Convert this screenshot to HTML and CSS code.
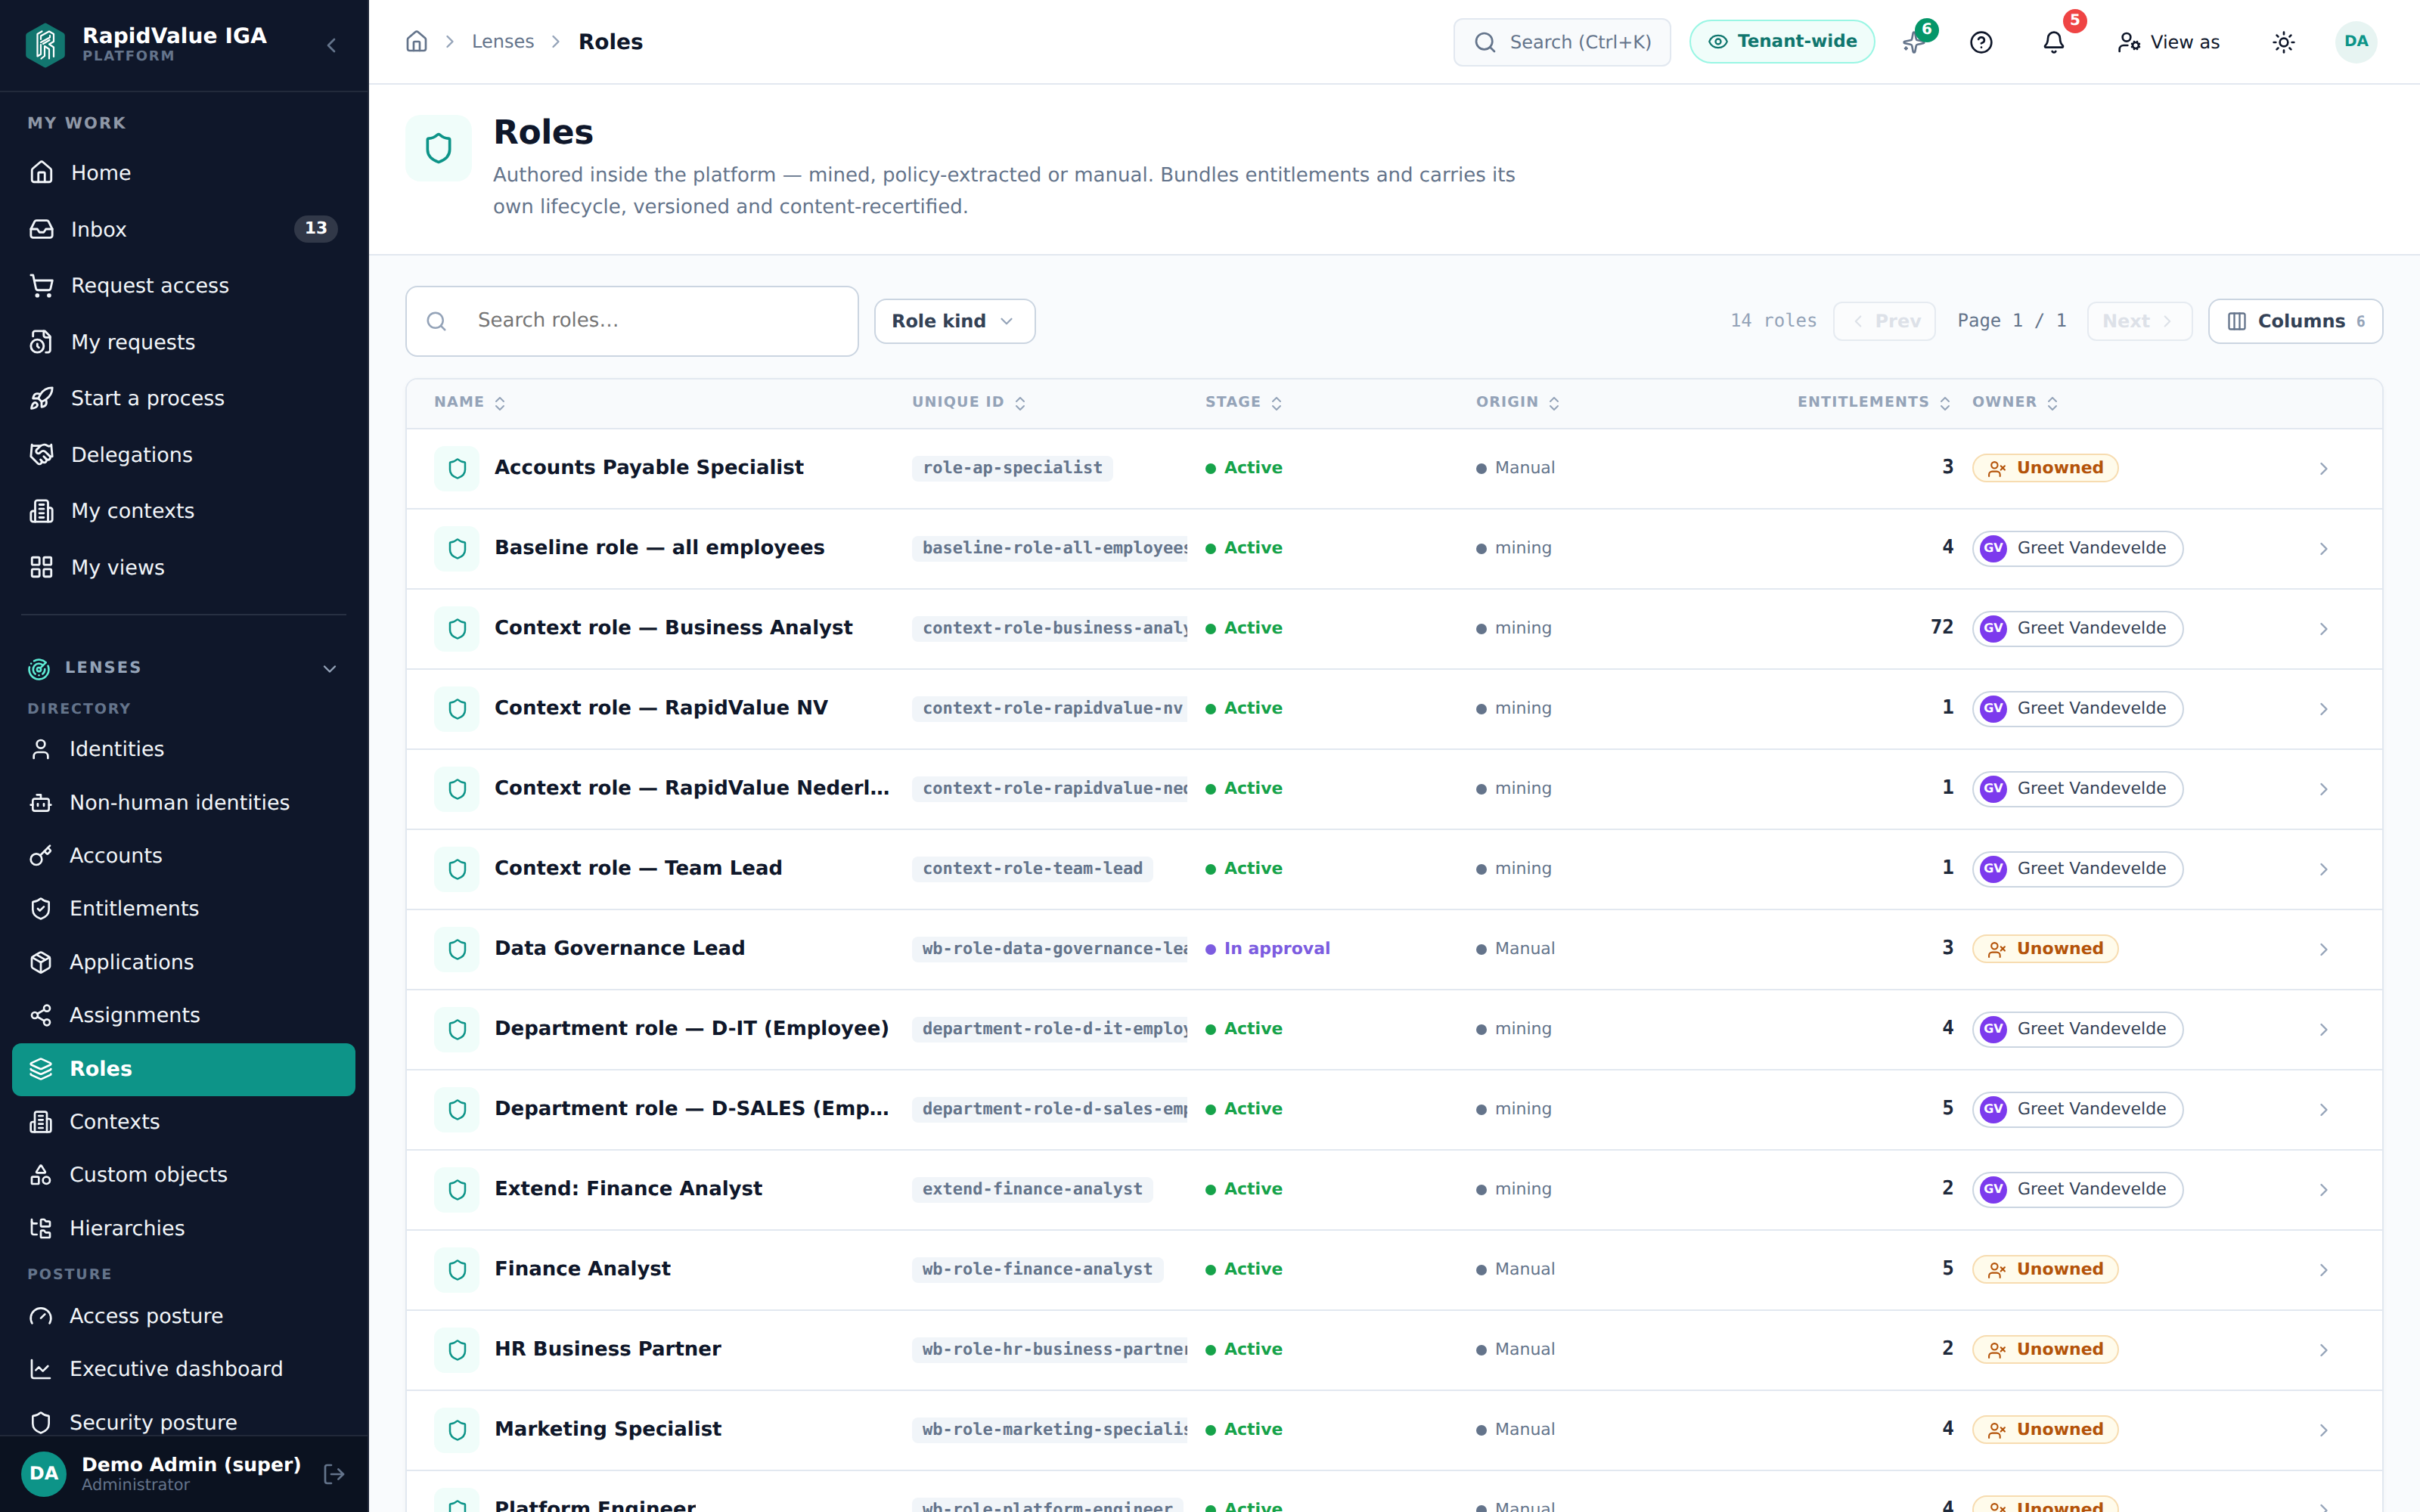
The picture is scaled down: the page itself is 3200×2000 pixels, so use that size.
FILE: index.html
```html
<!DOCTYPE html>
<html lang="en">
<head>
  <meta charset="UTF-8">
  <meta name="viewport" content="width=device-width, initial-scale=1.0">
  <title>Roles - RapidValue IGA</title>
  <link rel="stylesheet" href="styles.css">
</head>
<body>
  <svg class="sprite" aria-hidden="true">
    <symbol id="i-home" viewBox="0 0 24 24"><path d="M15 21v-8a1 1 0 0 0-1-1h-4a1 1 0 0 0-1 1v8"/><path d="M3 10a2 2 0 0 1 .709-1.528l7-5.999a2 2 0 0 1 2.582 0l7 5.999A2 2 0 0 1 21 10v9a2 2 0 0 1-2 2H5a2 2 0 0 1-2-2z"/></symbol>
    <symbol id="i-inbox" viewBox="0 0 24 24"><path d="M22 12h-6l-2 3h-4l-2-3H2"/><path d="M5.45 5.11 2 12v6a2 2 0 0 0 2 2h16a2 2 0 0 0 2-2v-6l-3.45-6.89A2 2 0 0 0 16.76 4H7.24a2 2 0 0 0-1.79 1.11z"/></symbol>
    <symbol id="i-cart" viewBox="0 0 24 24"><circle cx="8" cy="21" r="1"/><circle cx="19" cy="21" r="1"/><path d="M2.05 2.05h2l2.66 12.42a2 2 0 0 0 2 1.58h9.78a2 2 0 0 0 1.95-1.57l1.65-7.43H5.12"/></symbol>
    <symbol id="i-file-clock" viewBox="0 0 24 24"><path d="M16 22h2a2 2 0 0 0 2-2V7l-5-5H6a2 2 0 0 0-2 2v3"/><path d="M14 2v4a2 2 0 0 0 2 2h4"/><circle cx="8" cy="16" r="6"/><path d="M9.5 17.5 8 16.25V14"/></symbol>
    <symbol id="i-rocket" viewBox="0 0 24 24"><path d="M4.5 16.5c-1.5 1.26-2 5-2 5s3.74-.5 5-2c.71-.84.7-2.13-.09-2.91a2.18 2.18 0 0 0-2.91-.09z"/><path d="m12 15-3-3a22 22 0 0 1 2-3.95A12.88 12.88 0 0 1 22 2c0 2.72-.78 7.5-6 11a22.35 22.35 0 0 1-4 2z"/><path d="M9 12H4s.55-3.03 2-4c1.62-1.08 5 0 5 0"/><path d="M12 15v5s3.03-.55 4-2c1.08-1.62 0-5 0-5"/></symbol>
    <symbol id="i-handshake" viewBox="0 0 24 24"><path d="m11 17 2 2a1 1 0 1 0 3-3"/><path d="m14 14 2.5 2.5a1 1 0 1 0 3-3l-3.88-3.88a3 3 0 0 0-4.24 0l-.88.88a1 1 0 1 1-3-3l2.81-2.81a5.79 5.79 0 0 1 7.06-.87l.47.28a2 2 0 0 0 1.42.25L21 4"/><path d="m21 3 1 11h-2"/><path d="M3 3 2 14l6.5 6.5a1 1 0 1 0 3-3"/><path d="M3 4h8"/></symbol>
    <symbol id="i-building" viewBox="0 0 24 24"><path d="M6 22V4a2 2 0 0 1 2-2h8a2 2 0 0 1 2 2v18Z"/><path d="M6 12H4a2 2 0 0 0-2 2v6a2 2 0 0 0 2 2h2"/><path d="M18 9h2a2 2 0 0 1 2 2v9a2 2 0 0 1-2 2h-2"/><path d="M10 6h4"/><path d="M10 10h4"/><path d="M10 14h4"/><path d="M10 18h4"/></symbol>
    <symbol id="i-grid" viewBox="0 0 24 24"><rect width="7" height="7" x="3" y="3" rx="1"/><rect width="7" height="7" x="14" y="3" rx="1"/><rect width="7" height="7" x="14" y="14" rx="1"/><rect width="7" height="7" x="3" y="14" rx="1"/></symbol>
    <symbol id="i-radar" viewBox="0 0 24 24"><path d="M19.07 4.93A10 10 0 0 0 6.99 3.34"/><path d="M4 6h.01"/><path d="M2.29 9.62A10 10 0 1 0 21.31 8.35"/><path d="M16.24 7.76A6 6 0 1 0 8.23 16.67"/><path d="M12 18h.01"/><path d="M17.99 11.66A6 6 0 0 1 15.77 16.67"/><circle cx="12" cy="12" r="2"/><path d="m13.41 10.59 5.66-5.66"/></symbol>
    <symbol id="i-user" viewBox="0 0 24 24"><path d="M19 21v-2a4 4 0 0 0-4-4H9a4 4 0 0 0-4 4v2"/><circle cx="12" cy="7" r="4"/></symbol>
    <symbol id="i-bot" viewBox="0 0 24 24"><path d="M12 8V4H8"/><rect width="16" height="12" x="4" y="8" rx="2"/><path d="M2 14h2"/><path d="M20 14h2"/><path d="M15 13v2"/><path d="M9 13v2"/></symbol>
    <symbol id="i-key" viewBox="0 0 24 24"><path d="m15.5 7.5 2.3 2.3a1 1 0 0 0 1.4 0l2.1-2.1a1 1 0 0 0 0-1.4L19 4"/><path d="m21 2-9.6 9.6"/><circle cx="7.5" cy="15.5" r="5.5"/></symbol>
    <symbol id="i-shield" viewBox="0 0 24 24"><path d="M20 13c0 5-3.5 7.5-7.66 8.95a1 1 0 0 1-.67-.01C7.5 20.5 4 18 4 13V6a1 1 0 0 1 1-1c2 0 4.5-1.2 6.24-2.72a1.17 1.17 0 0 1 1.52 0C14.51 3.81 17 5 19 5a1 1 0 0 1 1 1z"/></symbol>
    <symbol id="i-shield-check" viewBox="0 0 24 24"><path d="M20 13c0 5-3.5 7.5-7.66 8.95a1 1 0 0 1-.67-.01C7.5 20.5 4 18 4 13V6a1 1 0 0 1 1-1c2 0 4.5-1.2 6.24-2.72a1.17 1.17 0 0 1 1.52 0C14.51 3.81 17 5 19 5a1 1 0 0 1 1 1z"/><path d="m9 12 2 2 4-4"/></symbol>
    <symbol id="i-package" viewBox="0 0 24 24"><path d="M11 21.73a2 2 0 0 0 2 0l7-4A2 2 0 0 0 21 16V8a2 2 0 0 0-1-1.73l-7-4a2 2 0 0 0-2 0l-7 4A2 2 0 0 0 3 8v8a2 2 0 0 0 1 1.73z"/><path d="M12 22V12"/><path d="M3.29 7 12 12l8.71-5"/><path d="m7.5 4.27 9 5.15"/></symbol>
    <symbol id="i-share" viewBox="0 0 24 24"><circle cx="18" cy="5" r="3"/><circle cx="6" cy="12" r="3"/><circle cx="18" cy="19" r="3"/><path d="m8.59 13.51 6.83 3.98"/><path d="m15.41 6.51-6.82 3.98"/></symbol>
    <symbol id="i-layers" viewBox="0 0 24 24"><path d="M12.83 2.18a2 2 0 0 0-1.66 0L2.6 6.08a1 1 0 0 0 0 1.83l8.58 3.91a2 2 0 0 0 1.66 0l8.58-3.9a1 1 0 0 0 0-1.83z"/><path d="M2 12a1 1 0 0 0 .58.91l8.6 3.91a2 2 0 0 0 1.65 0l8.58-3.9A1 1 0 0 0 22 12"/><path d="M2 17a1 1 0 0 0 .58.91l8.6 3.91a2 2 0 0 0 1.65 0l8.58-3.9A1 1 0 0 0 22 17"/></symbol>
    <symbol id="i-shapes" viewBox="0 0 24 24"><path d="M8.3 10a.7.7 0 0 1-.626-1.079L11.4 3a.7.7 0 0 1 1.198-.043L16.3 8.9a.7.7 0 0 1-.572 1.1Z"/><rect x="3" y="14" width="7" height="7" rx="1"/><circle cx="17.5" cy="17.5" r="3.5"/></symbol>
    <symbol id="i-tree" viewBox="0 0 24 24"><path d="M20 10a1 1 0 0 0 1-1V6a1 1 0 0 0-1-1h-2.5a1 1 0 0 1-.8-.4l-.9-1.2A1 1 0 0 0 15 3h-2a1 1 0 0 0-1 1v5a1 1 0 0 0 1 1Z"/><path d="M20 21a1 1 0 0 0 1-1v-3a1 1 0 0 0-1-1h-2.9a1 1 0 0 1-.88-.55l-.42-.85a1 1 0 0 0-.92-.6H13a1 1 0 0 0-1 1v5a1 1 0 0 0 1 1Z"/><path d="M3 5a2 2 0 0 0 2 2h3"/><path d="M3 3v13a2 2 0 0 0 2 2h3"/></symbol>
    <symbol id="i-gauge" viewBox="0 0 24 24"><path d="m12 14 4-4"/><path d="M3.34 19a10 10 0 1 1 17.32 0"/></symbol>
    <symbol id="i-chart" viewBox="0 0 24 24"><path d="M3 3v16a2 2 0 0 0 2 2h16"/><path d="m19 9-5 5-4-4-3 3"/></symbol>
    <symbol id="i-logout" viewBox="0 0 24 24"><path d="m16 17 5-5-5-5"/><path d="M21 12H9"/><path d="M9 21H5a2 2 0 0 1-2-2V5a2 2 0 0 1 2-2h4"/></symbol>
    <symbol id="i-search" viewBox="0 0 24 24"><path d="m21 21-4.34-4.34"/><circle cx="11" cy="11" r="8"/></symbol>
    <symbol id="i-eye" viewBox="0 0 24 24"><path d="M2.062 12.348a1 1 0 0 1 0-.696 10.75 10.75 0 0 1 19.876 0 1 1 0 0 1 0 .696 10.75 10.75 0 0 1-19.876 0"/><circle cx="12" cy="12" r="3"/></symbol>
    <symbol id="i-sparkles" viewBox="0 0 24 24"><path d="M11.017 2.814a1 1 0 0 1 1.966 0l1.051 5.558a2 2 0 0 0 1.594 1.594l5.558 1.051a1 1 0 0 1 0 1.966l-5.558 1.051a2 2 0 0 0-1.594 1.594l-1.051 5.558a1 1 0 0 1-1.966 0l-1.051-5.558a2 2 0 0 0-1.594-1.594l-5.558-1.051a1 1 0 0 1 0-1.966l5.558-1.051a2 2 0 0 0 1.594-1.594z"/><path d="M4 17v2"/><path d="M5 18H3"/></symbol>
    <symbol id="i-help" viewBox="0 0 24 24"><circle cx="12" cy="12" r="10"/><path d="M9.09 9a3 3 0 0 1 5.83 1c0 2-3 3-3 3"/><path d="M12 17h.01"/></symbol>
    <symbol id="i-bell" viewBox="0 0 24 24"><path d="M10.268 21a2 2 0 0 0 3.464 0"/><path d="M3.262 15.326A1 1 0 0 0 4 17h16a1 1 0 0 0 .74-1.673C19.41 13.956 18 12.499 18 8A6 6 0 0 0 6 8c0 4.499-1.411 5.956-2.738 7.326"/></symbol>
    <symbol id="i-user-cog" viewBox="0 0 24 24"><path d="M10 15H6a4 4 0 0 0-4 4v2"/><path d="m14.305 16.53.923-.382"/><path d="m15.228 13.852-.923-.383"/><path d="m16.852 12.228-.383-.923"/><path d="m16.852 17.772-.383.924"/><path d="m19.148 12.228.383-.923"/><path d="m19.53 18.696-.382-.924"/><path d="m20.772 13.852.924-.383"/><path d="m20.772 16.148.924.383"/><circle cx="18" cy="15" r="3"/><circle cx="9" cy="7" r="4"/></symbol>
    <symbol id="i-sun" viewBox="0 0 24 24"><circle cx="12" cy="12" r="4"/><path d="M12 2v2"/><path d="M12 20v2"/><path d="m4.93 4.93 1.41 1.41"/><path d="m17.66 17.66 1.41 1.41"/><path d="M2 12h2"/><path d="M20 12h2"/><path d="m6.34 17.66-1.41 1.41"/><path d="m19.07 4.93-1.41 1.41"/></symbol>
    <symbol id="i-user-x" viewBox="0 0 24 24"><path d="M16 21v-2a4 4 0 0 0-4-4H6a4 4 0 0 0-4 4v2"/><circle cx="9" cy="7" r="4"/><path d="m17 8 5 5"/><path d="m22 8-5 5"/></symbol>
    <symbol id="i-columns" viewBox="0 0 24 24"><rect width="18" height="18" x="3" y="3" rx="2"/><path d="M9 3v18"/><path d="M15 3v18"/></symbol>
    <symbol id="i-sort" viewBox="0 0 24 24"><path d="m7 15 5 5 5-5"/><path d="m7 9 5-5 5 5"/></symbol>
    <symbol id="i-left" viewBox="0 0 24 24"><path d="m15 18-6-6 6-6"/></symbol>
    <symbol id="i-right" viewBox="0 0 24 24"><path d="m9 18 6-6-6-6"/></symbol>
    <symbol id="i-down" viewBox="0 0 24 24"><path d="m6 9 6 6 6-6"/></symbol>
  </svg>

  <aside class="sidebar">
    <div class="brand">
      <svg class="logo" viewBox="0 0 52 60">
        <path class="logo-hex" d="M24 1.2a4 4 0 0 1 4 0l21.800 12.300a4 4 0 0 1 2 3.500v26a4 4 0 0 1-2 3.500L28 58.800a4 4 0 0 1-4 0L2.200 46.500a4 4 0 0 1-2-3.500V17a4 4 0 0 1 2-3.500z"/>
        <path class="logo-line" d="M21.500 11.500 15.500 15v29.500l4.500-2.700V29"/>
        <path class="logo-line" d="M20 22v-4.500L31 11.500l6 3.500v10L31 28.500l6 4V45"/>
        <path class="logo-line" d="M20 26l12-6.500v-2.500M31.500 23 23 28"/>
        <path class="logo-line" d="M20.500 47.500 25 44V31l6 4v12.500"/>
      </svg>
      <div class="brand-text">
        <div class="brand-name">RapidValue IGA</div>
        <div class="brand-sub">PLATFORM</div>
      </div>
      <svg class="icon collapse"><use href="#i-left"/></svg>
    </div>

    <nav class="nav">
      <div class="nav-title">MY WORK</div>
      <a class="nav-item"><svg class="icon"><use href="#i-home"/></svg><span>Home</span></a>
      <a class="nav-item"><svg class="icon"><use href="#i-inbox"/></svg><span>Inbox</span><b class="count">13</b></a>
      <a class="nav-item"><svg class="icon"><use href="#i-cart"/></svg><span>Request access</span></a>
      <a class="nav-item"><svg class="icon"><use href="#i-file-clock"/></svg><span>My requests</span></a>
      <a class="nav-item"><svg class="icon"><use href="#i-rocket"/></svg><span>Start a process</span></a>
      <a class="nav-item"><svg class="icon"><use href="#i-handshake"/></svg><span>Delegations</span></a>
      <a class="nav-item"><svg class="icon"><use href="#i-building"/></svg><span>My contexts</span></a>
      <a class="nav-item"><svg class="icon"><use href="#i-grid"/></svg><span>My views</span></a>
      <hr class="nav-line">
      <div class="nav-group">
        <svg class="icon radar"><use href="#i-radar"/></svg>
        <span>LENSES</span>
        <svg class="icon group-arrow"><use href="#i-down"/></svg>
      </div>
      <div class="nav-sub first">DIRECTORY</div>
      <a class="nav-item small"><svg class="icon"><use href="#i-user"/></svg><span>Identities</span></a>
      <a class="nav-item small"><svg class="icon"><use href="#i-bot"/></svg><span>Non-human identities</span></a>
      <a class="nav-item small"><svg class="icon"><use href="#i-key"/></svg><span>Accounts</span></a>
      <a class="nav-item small"><svg class="icon"><use href="#i-shield-check"/></svg><span>Entitlements</span></a>
      <a class="nav-item small"><svg class="icon"><use href="#i-package"/></svg><span>Applications</span></a>
      <a class="nav-item small"><svg class="icon"><use href="#i-share"/></svg><span>Assignments</span></a>
      <a class="nav-item small active"><svg class="icon"><use href="#i-layers"/></svg><span>Roles</span></a>
      <a class="nav-item small"><svg class="icon"><use href="#i-building"/></svg><span>Contexts</span></a>
      <a class="nav-item small"><svg class="icon"><use href="#i-shapes"/></svg><span>Custom objects</span></a>
      <a class="nav-item small"><svg class="icon"><use href="#i-tree"/></svg><span>Hierarchies</span></a>
      <div class="nav-sub">POSTURE</div>
      <a class="nav-item small"><svg class="icon"><use href="#i-gauge"/></svg><span>Access posture</span></a>
      <a class="nav-item small"><svg class="icon"><use href="#i-chart"/></svg><span>Executive dashboard</span></a>
      <a class="nav-item small"><svg class="icon"><use href="#i-shield"/></svg><span>Security posture</span></a>
    </nav>

    <div class="account">
      <div class="account-avatar">DA</div>
      <div>
        <div class="account-name">Demo Admin (super)</div>
        <div class="account-role">Administrator</div>
      </div>
      <svg class="icon logout"><use href="#i-logout"/></svg>
    </div>
  </aside>

  <main class="main">
    <header class="topbar">
      <div class="crumbs">
        <svg class="icon crumb-home"><use href="#i-home"/></svg>
        <svg class="icon crumb-sep"><use href="#i-right"/></svg>
        <span>Lenses</span>
        <svg class="icon crumb-sep"><use href="#i-right"/></svg>
        <b>Roles</b>
      </div>
      <div class="search-box"><svg class="icon"><use href="#i-search"/></svg>Search (Ctrl+K)</div>
      <div class="tenant"><svg class="icon"><use href="#i-eye"/></svg>Tenant-wide</div>
      <div class="tool sparkle"><svg class="icon"><use href="#i-sparkles"/></svg><b class="badge green">6</b></div>
      <div class="tool help"><svg class="icon"><use href="#i-help"/></svg></div>
      <div class="tool bell"><svg class="icon"><use href="#i-bell"/></svg><b class="badge red">5</b></div>
      <div class="view-as"><svg class="icon"><use href="#i-user-cog"/></svg>View as</div>
      <div class="tool"><svg class="icon"><use href="#i-sun"/></svg></div>
      <div class="me">DA</div>
    </header>

    <section class="page-head">
      <div class="page-icon"><svg class="icon"><use href="#i-shield"/></svg></div>
      <div>
        <h1>Roles</h1>
        <p>Authored inside the platform — mined, policy-extracted or manual. Bundles entitlements and carries its own lifecycle, versioned and content-recertified.</p>
      </div>
    </section>

    <section class="content">
      <div class="toolbar">
        <div class="filter-input"><svg class="icon"><use href="#i-search"/></svg>Search roles…</div>
        <div class="btn kind">Role kind<svg class="icon"><use href="#i-down"/></svg></div>
        <div class="pager">
          <span class="total">14 roles</span>
          <div class="btn page-btn prev"><svg class="icon"><use href="#i-left"/></svg>Prev</div>
          <span class="page-no">Page 1 / 1</span>
          <div class="btn page-btn next">Next<svg class="icon"><use href="#i-right"/></svg></div>
          <div class="btn columns"><svg class="icon"><use href="#i-columns"/></svg>Columns<span>6</span></div>
        </div>
      </div>

      <div class="table">
        <div class="row head">
          <div>NAME<svg class="icon"><use href="#i-sort"/></svg></div>
          <div>UNIQUE ID<svg class="icon"><use href="#i-sort"/></svg></div>
          <div>STAGE<svg class="icon"><use href="#i-sort"/></svg></div>
          <div>ORIGIN<svg class="icon"><use href="#i-sort"/></svg></div>
          <div class="right">ENTITLEMENTS<svg class="icon"><use href="#i-sort"/></svg></div>
          <div>OWNER<svg class="icon"><use href="#i-sort"/></svg></div>
          <div></div>
        </div>
        <div id="rows"></div>
      </div>
    </section>
  </main>

  <script>
    const roles = [
      ['Accounts Payable Specialist', 'role-ap-specialist', 'Active', 'Manual', 3, ''],
      ['Baseline role — all employees', 'baseline-role-all-employees', 'Active', 'mining', 4, 'Greet Vandevelde'],
      ['Context role — Business Analyst', 'context-role-business-analyst', 'Active', 'mining', 72, 'Greet Vandevelde'],
      ['Context role — RapidValue NV', 'context-role-rapidvalue-nv', 'Active', 'mining', 1, 'Greet Vandevelde'],
      ['Context role — RapidValue Nederland', 'context-role-rapidvalue-nederland', 'Active', 'mining', 1, 'Greet Vandevelde'],
      ['Context role — Team Lead', 'context-role-team-lead', 'Active', 'mining', 1, 'Greet Vandevelde'],
      ['Data Governance Lead', 'wb-role-data-governance-lead', 'In approval', 'Manual', 3, ''],
      ['Department role — D-IT (Employee)', 'department-role-d-it-employee', 'Active', 'mining', 4, 'Greet Vandevelde'],
      ['Department role — D-SALES (Employee)', 'department-role-d-sales-employee', 'Active', 'mining', 5, 'Greet Vandevelde'],
      ['Extend: Finance Analyst', 'extend-finance-analyst', 'Active', 'mining', 2, 'Greet Vandevelde'],
      ['Finance Analyst', 'wb-role-finance-analyst', 'Active', 'Manual', 5, ''],
      ['HR Business Partner', 'wb-role-hr-business-partner', 'Active', 'Manual', 2, ''],
      ['Marketing Specialist', 'wb-role-marketing-specialist', 'Active', 'Manual', 4, ''],
      ['Platform Engineer', 'wb-role-platform-engineer', 'Active', 'Manual', 4, '']
    ];

    function icon(name) {
      return `<svg class="icon"><use href="#i-${name}"/></svg>`;
    }

    function ownerCell(owner) {
      if (!owner) return `<div class="unowned">${icon('user-x')}Unowned</div>`;
      const initials = owner.split(' ').map(w => w[0]).join('');
      return `<div class="owner"><i>${initials}</i>${owner}</div>`;
    }

    document.getElementById('rows').innerHTML = roles.map(([name, uid, stage, origin, count, owner]) => `
      <div class="row">
        <div class="name"><div class="tile">${icon('shield')}</div><span>${name}</span></div>
        <div class="uid"><code>${uid}</code></div>
        <div class="stage ${stage === 'Active' ? 'active' : 'approval'}"><span class="dot"></span>${stage}</div>
        <div class="origin"><span class="dot"></span>${origin}</div>
        <div class="num">${count}</div>
        <div>${ownerCell(owner)}</div>
        <div class="go">${icon('right')}</div>
      </div>`).join('');
  </script>
</body>
</html>
```

FILE: styles.css
```css
* { box-sizing: border-box; }
body {
  margin: 0; width: 3200px; height: 2000px; overflow: hidden;
  display: flex; background: #f9fbfd; color: #0f172a;
  font-family: "DejaVu Sans", sans-serif; font-size: 26px;
  text-rendering: geometricPrecision;
}
.sprite { display: none; }
.icon {
  width: 32px; height: 32px; flex-shrink: 0; display: block;
  fill: none; stroke: currentColor; stroke-width: 2;
  stroke-linecap: round; stroke-linejoin: round;
}

/* sidebar */
.sidebar {
  width: 488px; height: 2000px; flex-shrink: 0;
  display: flex; flex-direction: column;
  background: #0f172a; color: #f1f5f9; border-right: 2px solid #212839;
}
.brand {
  height: 122px; flex-shrink: 0; padding: 0 32px 0 34px;
  display: flex; align-items: center; border-bottom: 2px solid #222a3b;
}
.logo { width: 52px; height: 60px; }
.logo-hex { fill: #12766f; }
.logo-line { fill: none; stroke: #fff; stroke-width: 2.2; stroke-linecap: round; stroke-linejoin: round; }
.brand-text { margin-left: 23px; flex: 1; padding-bottom: 2px; }
.brand-name { font-size: 28px; font-weight: bold; line-height: 32px; color: #fff; letter-spacing: 0.1px; }
.brand-sub { font-size: 18px; font-weight: bold; line-height: 22px; letter-spacing: 0.1em; color: #64748b; }
.collapse { color: #64748b; }

.nav { flex: 1; min-height: 0; overflow: hidden; padding: 0 16px; }
.nav-title {
  padding: 27px 20px 13.2px; font-size: 21px; font-weight: bold;
  line-height: 29px; letter-spacing: 0.1em; color: #8f98a7;
}
.nav-item {
  height: 74.57px; padding: 0 22px; display: flex; align-items: center; gap: 22px;
  font-size: 27px;
}
.nav-item span { padding-top: 2px; }
.nav-item .icon { width: 34px; height: 34px; }
.nav-item.small { width: 454px; height: 70.4px; padding-bottom: 3px; border-radius: 12px; }
.nav-item.small span { padding-top: 1px; }
.nav-item.small .icon { width: 32px; height: 32px; }
.nav-item.active { background: #0d9488; color: #fff; font-weight: bold; }
.count {
  margin-left: auto; min-width: 58px; height: 36px; border-radius: 18px;
  margin-right: 1px; text-align: center; line-height: 35px; font-size: 22px;
  background: #313848; color: #fff;
}
.nav-line { margin: 24.2px 12px 0; border: 0; border-top: 2px solid #273042; }
.nav-group {
  margin-top: 45px; height: 52.6px; padding: 0 20px; display: flex; align-items: center;
  font-size: 21px; font-weight: bold; letter-spacing: 0.1em; color: #94a3b8;
}
.nav-group span { margin-left: 19px; padding-bottom: 4px; }
.nav-group .radar { width: 31px; height: 31px; color: #5eead4; }
.nav-group .group-arrow { width: 28px; height: 28px; margin-left: auto; }
.nav-sub {
  height: 46px; padding: 4px 20px 0; display: flex; align-items: center;
  font-size: 19px; font-weight: bold; letter-spacing: 0.1em; color: #64748b;
}
.nav-sub.first { padding-top: 8px; }

.account {
  height: 102px; flex-shrink: 0; padding: 0 28px; display: flex; align-items: center;
  border-top: 2px solid #212839; background: #0b1220;
}
.account-avatar {
  width: 60px; height: 60px; margin-right: 20px; border-radius: 50%;
  background: #0d9488; color: #fff; font-size: 24px; font-weight: bold;
  line-height: 58px; text-align: center;
}
.account-name { font-size: 25px; font-weight: bold; line-height: 28px; color: #fff; }
.account-role { font-size: 21px; line-height: 24px; color: #64748b; }
.logout { margin-left: auto; color: #64748b; }

/* top bar */
.main { flex: 1; min-width: 0; display: flex; flex-direction: column; }
.topbar {
  height: 112px; flex-shrink: 0; padding: 2px 56px 0 47px;
  display: flex; align-items: center;
  background: #fff; border-bottom: 2px solid #e2e8f0; font-size: 24px;
}
.crumbs { display: flex; align-items: center; gap: 14px; color: #64748b; margin-right: auto; padding-bottom: 2px; }
.crumbs span { margin-left: 1px; }
.crumbs b { font-size: 28px; color: #0f172a; margin-left: 2px; }
.crumb-sep { width: 28px; height: 28px; color: #94a3b8; }
.search-box {
  width: 288px; height: 64px; padding-left: 24px; display: flex; align-items: center; gap: 17px;
  border: 2px solid #e2e8f0; border-radius: 12px; background: #f8fafc; color: #64748b;
}
.tenant {
  width: 246px; height: 58px; margin: 0 19px 2px 24px; padding-left: 22px;
  display: flex; align-items: center; gap: 12px;
  border: 2px solid #99f6e4; border-radius: 29px; background: #f0fdfa;
  color: #0f766e; font-size: 23px; font-weight: bold;
}
.tenant .icon { width: 28px; height: 28px; }
.tool { position: relative; width: 64px; height: 64px; display: flex; align-items: center; justify-content: center; }
.sparkle { color: #64748b; }
.help { margin-left: 25px; }
.bell { margin-left: 32px; }
.badge {
  position: absolute; width: 32px; height: 32px; border-radius: 50%;
  color: #fff; font-size: 20px; line-height: 29px; text-align: center;
}
.badge.green { left: 33px; top: 0; background: #059669; }
.badge.red { left: 44px; top: -12px; background: #ef4444; }
.view-as { width: 188px; margin-left: 52px; display: flex; align-items: center; gap: 12px; }
.me {
  width: 56px; height: 56px; margin-left: 36px; border-radius: 50%;
  background: #e7f4f2; color: #0d9488; font-size: 20px; font-weight: bold;
  line-height: 52px; text-align: center;
}

/* page header */
.page-head {
  height: 226px; flex-shrink: 0; padding: 40px 48px 0; display: flex; gap: 28px;
  background: #fff; border-bottom: 2px solid #e2e8f0;
}
.page-icon {
  width: 88px; height: 88px; border-radius: 20px; background: #f0fdfa; color: #0d9488;
  display: flex; align-items: center; justify-content: center;
}
.page-icon .icon { width: 44px; height: 44px; }
h1 { margin: -2px 0 0; font-size: 44px; line-height: 52px; letter-spacing: -0.01em; }
.page-head p { margin: 9px 0 0; width: 1360px; font-size: 26px; line-height: 42px; color: #64748b; }

/* toolbar */
.content { padding: 40px 48px 0; }
.toolbar { height: 94px; display: flex; align-items: center; margin-bottom: 28px; }
.filter-input {
  width: 600px; height: 94px; padding-left: 24px; padding-bottom: 3px;
  display: flex; align-items: center; gap: 40px;
  border: 2px solid #cbd5e1; border-radius: 16px; background: #fff; color: #757575;
}
.filter-input .icon { width: 30px; height: 30px; color: #94a3b8; margin-top: 2px; }
.btn {
  height: 60px; padding-bottom: 1px; display: flex; align-items: center;
  border: 2px solid #cbd5e1; border-radius: 16px; background: #fff;
  color: #334155; font-size: 24px; font-weight: bold;
}
.kind { width: 214px; margin-left: 20px; padding-left: 21px; font-size: 24px; gap: 14px; letter-spacing: -0.1px; white-space: nowrap; }
.kind .icon { width: 26px; height: 26px; color: #94a3b8; }
.pager { margin-left: auto; display: flex; align-items: center; }
.total, .page-no { font-family: "DejaVu Sans Mono", monospace; font-size: 24px; padding-bottom: 3px; }
.total { color: #94a3b8; margin-right: 20px; }
.page-no { color: #64748b; margin: 0 27px 0 29px; }
.page-btn { height: 52px; border-radius: 12px; opacity: 0.4; color: #b4bcc9; gap: 10px; }
.page-btn .icon { width: 26px; height: 26px; }
.prev { width: 136px; padding-left: 18px; }
.next { width: 140px; padding-left: 18px; }
.columns { width: 232px; margin-left: 20px; padding-left: 22px; gap: 14px; }
.columns .icon { width: 28px; height: 28px; color: #64748b; }
.columns span { font-family: "DejaVu Sans Mono", monospace; font-size: 20px; color: #94a3b8; }

/* table */
.table {
  height: 1600px; border: 2px solid #e2e8f0; border-radius: 16px; background: #fff;
  overflow: hidden; box-shadow: 0 2px 6px rgba(15,23,42,0.04);
}
.row {
  height: 106px; padding: 0 36px; display: grid; align-items: center; column-gap: 24px;
  grid-template-columns: 608px 364px 334px 334px 274px 400px 82px;
  border-bottom: 2px solid #e2e8f0; font-size: 22px;
}
.row > div { min-width: 0; }
.head {
  height: 66px; padding-bottom: 4px; background: #f8fafc; color: #94a3b8;
  font-size: 19px; font-weight: bold; letter-spacing: 0.06em;
}
.head > div { display: flex; align-items: center; gap: 8px; }
.head .icon { width: 24px; height: 24px; margin-top: 4px; }
.head .right { justify-content: flex-end; }
.name { display: flex; align-items: center; gap: 20px; font-size: 26px; font-weight: bold; }
.name span { overflow: hidden; text-overflow: ellipsis; white-space: nowrap; padding-bottom: 3px; }
.tile {
  width: 60px; height: 60px; flex-shrink: 0; border-radius: 14px;
  background: #f0fdfa; color: #0d9488;
  display: flex; align-items: center; justify-content: center;
}
.tile .icon { width: 30px; height: 30px; margin: -1px 0 0 1px; }
.uid { overflow: hidden; display: flex; }
.uid code {
  height: 34px; padding: 0 14px; border-radius: 8px; background: #f1f5f9; color: #64748b;
  font: bold 22px/33px "DejaVu Sans Mono", monospace; white-space: nowrap;
}
.stage, .origin { display: flex; align-items: center; gap: 11px; line-height: 26px; padding-bottom: 1px; }
.dot { width: 14px; height: 14px; border-radius: 50%; background: currentColor; }
.stage { font-weight: bold; }
.stage.active { color: #16a34a; }
.stage.approval { color: #7c5ce0; }
.origin { color: #64748b; }
.num {
  text-align: right; padding-bottom: 4px; color: #1e293b;
  font-family: "DejaVu Sans Mono", monospace; font-size: 26px; font-weight: bold;
}
.unowned {
  width: 194px; height: 38px; margin-top: -2px; padding: 0 0 0 18px;
  display: flex; align-items: center; gap: 14px;
  border: 2px solid #f7dcb0; border-radius: 19px; background: #fffbeb;
  color: #b45309; font-weight: bold;
}
.unowned .icon { width: 25px; height: 25px; margin-top: 2px; }
.owner {
  width: 280px; height: 48px; padding-left: 8px; padding-bottom: 2px; display: flex; align-items: center; gap: 14px;
  border: 2px solid #cbd5e1; border-radius: 24px; background: #fff; color: #334155;
}
.owner i {
  width: 36px; height: 36px; margin-top: 2px; border-radius: 50%; background: #7c3aed; color: #fff;
  font-size: 16px; font-style: normal; font-weight: bold; line-height: 34px; text-align: center;
}
.go { display: flex; justify-content: center; color: #94a3b8; }
.go .icon { width: 28px; height: 28px; margin-top: -1px; }
```
